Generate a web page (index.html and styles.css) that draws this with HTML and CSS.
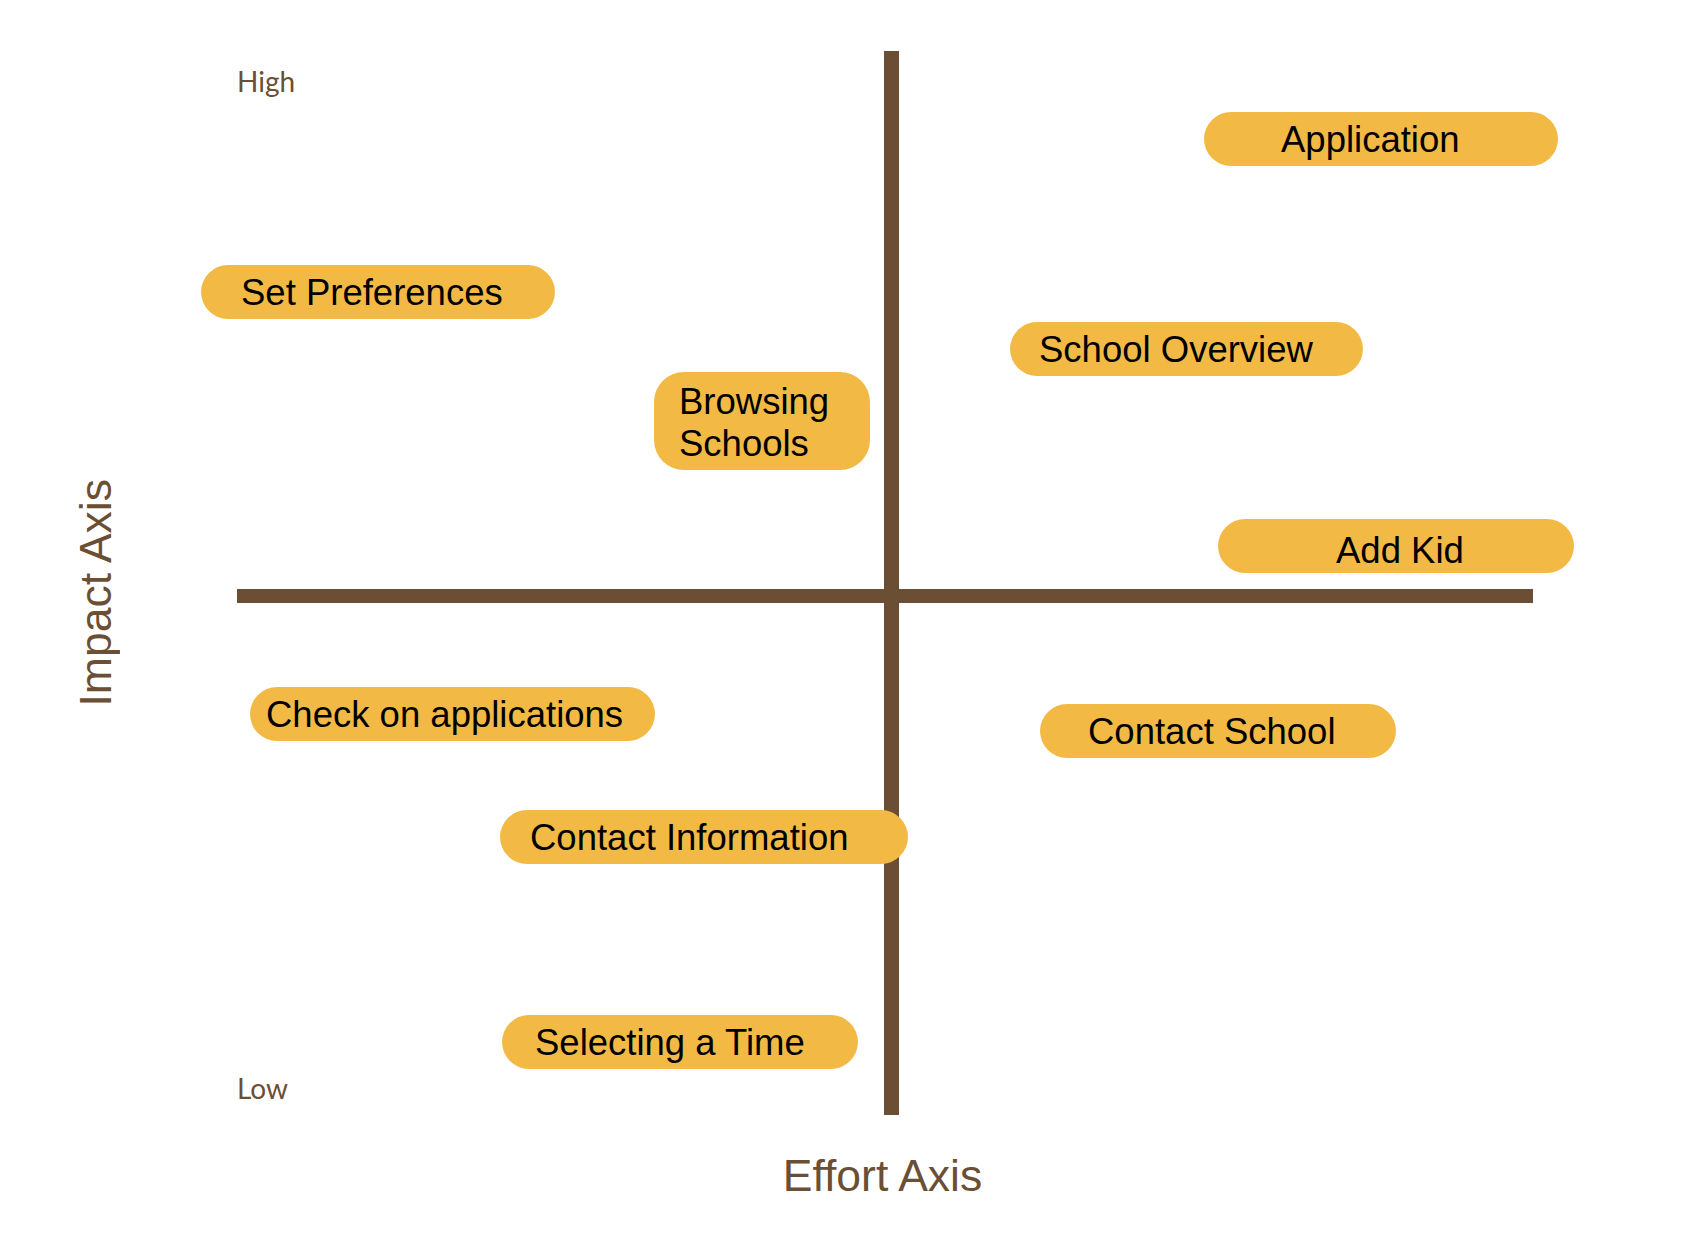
FILE: index.html
```html
<!DOCTYPE html>
<html lang="en">
<head>
<meta charset="utf-8">
<title>Impact / Effort Matrix</title>
<link rel="stylesheet" href="styles.css">
</head>
<body>
<main class="page">
  <div class="axis-title axis-title--y"><span class="axis-title__text axis-title__text--vertical">Impact Axis</span></div>

  <section class="chart" aria-label="Impact versus effort matrix">
    <div class="axis axis--vertical"></div>
    <div class="axis axis--horizontal"></div>

    <span class="tick tick--high">High</span>
    <span class="tick tick--low">Low</span>

    <div class="pill" style="left:1004px; top:112px; width:354px; padding-left:77px;">Application</div>
    <div class="pill" style="left:1px; top:265px; width:354px; padding-left:40px;">Set Preferences</div>
    <div class="pill" style="left:810px; top:322px; width:353px; padding-left:29px;">School Overview</div>
    <div class="pill pill--tall" style="left:454px; top:372px; width:216px; padding-left:25px;">Browsing<br>Schools</div>
    <div class="pill" style="left:1018px; top:519px; width:356px; padding-left:118px; padding-top:7px;">Add Kid</div>
    <div class="pill" style="left:50px; top:687px; width:405px; padding-left:16px;">Check on applications</div>
    <div class="pill" style="left:840px; top:704px; width:356px; padding-left:48px;">Contact School</div>
    <div class="pill" style="left:300px; top:810px; width:408px; padding-left:30px;">Contact Information</div>
    <div class="pill" style="left:302px; top:1015px; width:356px; padding-left:33px;">Selecting a Time</div>
  </section>

  <div class="axis-title axis-title--x"><span class="axis-title__text">Effort Axis</span></div>
</main>
</body>
</html>
```

FILE: styles.css
```css
html, body {
  margin: 0;
  padding: 0;
  background: #ffffff;
}

body {
  width: 1702px;
  height: 1234px;
  overflow: hidden;
  font-family: "Liberation Sans", Arial, sans-serif;
  color: #000000;
}

.page {
  display: grid;
  grid-template-columns: 200px 1365px 1fr;
  grid-template-rows: 1151px 1fr;
  width: 1702px;
  height: 1234px;
}

/* ---------- axis titles ---------- */
.axis-title {
  color: #6b4f35;
  font-family: "Liberation Sans", Arial, sans-serif;
}

.axis-title--y {
  grid-column: 1;
  grid-row: 1;
  display: flex;
  align-items: center;
  padding-left: 71px;
  padding-top: 34px;
  box-sizing: border-box;
}

.axis-title__text {
  font-size: 44.5px;
  line-height: 50px;
  white-space: nowrap;
}

.axis-title__text--vertical {
  font-size: 44.5px;
  writing-mode: vertical-rl;
  transform: rotate(180deg);
}

.axis-title--x {
  grid-column: 2;
  grid-row: 2;
  text-align: center;
}

/* ---------- chart canvas ---------- */
.chart {
  grid-column: 2 / 4;
  grid-row: 1;
  position: relative;
}

.axis {
  position: absolute;
  background: #6a4f35;
}

.axis--vertical {
  left: 684px;
  top: 51px;
  width: 15px;
  height: 1064px;
}

.axis--horizontal {
  left: 37px;
  top: 589px;
  width: 1296px;
  height: 14px;
}

.tick {
  position: absolute;
  left: 37px;
  font-family: Lato, "Noto Sans", sans-serif;
  font-size: 28px;
  line-height: 28px;
  color: #6b4f35;
}

.tick--high { top: 67px; }
.tick--low  { top: 1074px; }

.pill {
  position: absolute;
  box-sizing: border-box;
  height: 54px;
  padding-top: 3px;
  padding-bottom: 1px;
  border-radius: 27px;
  background: #f2ba45;
  font-family: "Liberation Sans", Arial, sans-serif;
  font-size: 36.5px;
  line-height: 50px;
  white-space: nowrap;
  color: #000000;
}

.pill--tall {
  height: 98px;
  padding-top: 9px;
  padding-bottom: 5px;
  line-height: 42px;
  border-radius: 30px;
}
```
